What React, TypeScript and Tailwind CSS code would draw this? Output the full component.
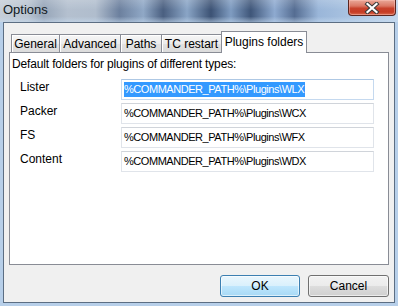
import React from "react";

const tabs = [
  { label: "General", w: "w-[49px]" },
  { label: "Advanced", w: "w-[62px]" },
  { label: "Paths", w: "w-[42px]" },
  { label: "TC restart", w: "w-[61px]" },
];

const rows = [
  { label: "Lister", value: "%COMMANDER_PATH%\\Plugins\\WLX", selected: true },
  { label: "Packer", value: "%COMMANDER_PATH%\\Plugins\\WCX" },
  { label: "FS", value: "%COMMANDER_PATH%\\Plugins\\WFX" },
  { label: "Content", value: "%COMMANDER_PATH%\\Plugins\\WDX" },
];

export default function App() {
  return (
    <div
      className="w-[398px] h-[306px] overflow-hidden flex flex-col bg-[#b7cfe9] text-[12px] text-black"
      style={{ fontFamily: '"Liberation Sans", Arial, sans-serif' }}
    >
      {/* Title bar */}
      <div className="h-[22px] shrink-0 flex items-start justify-between bg-[image:linear-gradient(180deg,rgba(255,255,255,0.18)_0%,rgba(255,255,255,0)_45%,rgba(255,255,255,0)_75%,rgba(200,220,240,0.55)_100%),linear-gradient(90deg,#c6ced8_0%,#b9c4d0_7%,#97a6b9_11%,#b4c0cf_17%,#b0bdcd_24%,#6c809e_30%,#90a8c6_36%,#4a5f80_41%,#8aa5c6_47%,#3c5274_53%,#7f9cc1_58%,#3f5679_63%,#8eaad0_69%,#556d92_74%,#9ab6d9_80%,#a9c3e1_88%,#c2d6ec_100%)]">
        <div className="pl-[3px] pt-[1px] text-[13px] leading-[18px] text-[#101820]">Options</div>
        <div className="mr-[2px] w-[48px] h-[16px] rounded-b-[4px] border border-t-0 border-[#5a2620] bg-[image:linear-gradient(180deg,#e9a898_0%,#db7764_40%,#c8422c_55%,#c63b24_80%,#d86a4e_100%)] shadow-[inset_0_0_0_1px_rgba(255,200,190,0.45)] flex items-center justify-center">
          <svg width="16" height="12" viewBox="0 0 16 12">
            <path d="M3.5 2 L12.5 10 M12.5 2 L3.5 10" stroke="#3b3b3b" strokeWidth="4.2" strokeLinecap="square" />
            <path d="M3.5 2 L12.5 10 M12.5 2 L3.5 10" stroke="#ffffff" strokeWidth="2.2" strokeLinecap="square" />
          </svg>
        </div>
      </div>

      {/* Client area */}
      <div className="ml-[3px] w-[392px] h-[281px] border border-[#5c6e83] bg-[#f0f0f0] px-[5px] pt-[8px] flex flex-col">
        {/* Tabs */}
        <div className="flex items-end pl-[2px] h-[21px]">
          {tabs.map((t, i) => (
            <div
              key={t.label}
              className={`${t.w} ${i > 0 ? "-ml-px" : ""} h-[18px] border border-b-0 border-[#898c95] bg-[image:linear-gradient(180deg,#f6f6f6_0%,#ececec_50%,#e2e2e2_51%,#dcdcdc_100%)] shadow-[inset_1px_1px_0_#ffffff] flex items-center justify-center leading-[16px]`}
            >
              {t.label}
            </div>
          ))}
          <div className="relative z-10 -ml-px w-[86px] h-[22px] -mb-px border border-b-0 border-[#898c95] bg-white flex items-center justify-center leading-[16px] pb-[1px]">
            Plugins folders
          </div>
        </div>

        {/* Panel */}
        <div className="w-[380px] h-[213px] border border-[#898c95] bg-white pt-[3px] pl-[2px] flex flex-col">
          <div className="leading-[16px] tracking-[-0.15px]">Default folders for plugins of different types:</div>
          <div className="mt-[7px] flex flex-col gap-[3px]">
            {rows.map((r) => (
              <div key={r.label} className="flex items-start">
                <div className="w-[109px] pl-[8px] leading-[16px]">{r.label}</div>
                <div
                  className={`w-[253px] h-[21px] border bg-white pl-[2px] flex items-center leading-[15px] text-[11px] tracking-[-0.45px] ${
                    r.selected ? "border-[#c5d9ef] border-t-[#aec8e4]" : "border-[#e0e4ea] border-t-[#d0d4da]"
                  }`}
                >
                  {r.selected ? (
                    <span className="bg-[#3399ff] text-white pr-[1px]">{r.value}</span>
                  ) : (
                    <span>{r.value}</span>
                  )}
                </div>
              </div>
            ))}
          </div>
        </div>

        {/* Buttons */}
        <div className="w-[380px] mt-[10px] flex justify-end gap-[8px]">
          <div className="w-[80px] h-[22px] rounded-[3px] border border-[#3c7fb1] bg-[image:linear-gradient(180deg,#eaf6fd_0%,#d9f0fc_50%,#bee6fd_51%,#a7d9f5_100%)] shadow-[inset_0_0_0_1px_rgba(255,255,255,0.6)] flex items-center justify-center leading-[16px]">
            OK
          </div>
          <div className="w-[81px] h-[22px] rounded-[3px] border border-[#707070] bg-[image:linear-gradient(180deg,#f2f2f2_0%,#ebebeb_50%,#dddddd_51%,#cfcfcf_100%)] shadow-[inset_0_0_0_1px_rgba(255,255,255,0.6)] flex items-center justify-center leading-[16px]">
            Cancel
          </div>
        </div>
      </div>
    </div>
  );
}
